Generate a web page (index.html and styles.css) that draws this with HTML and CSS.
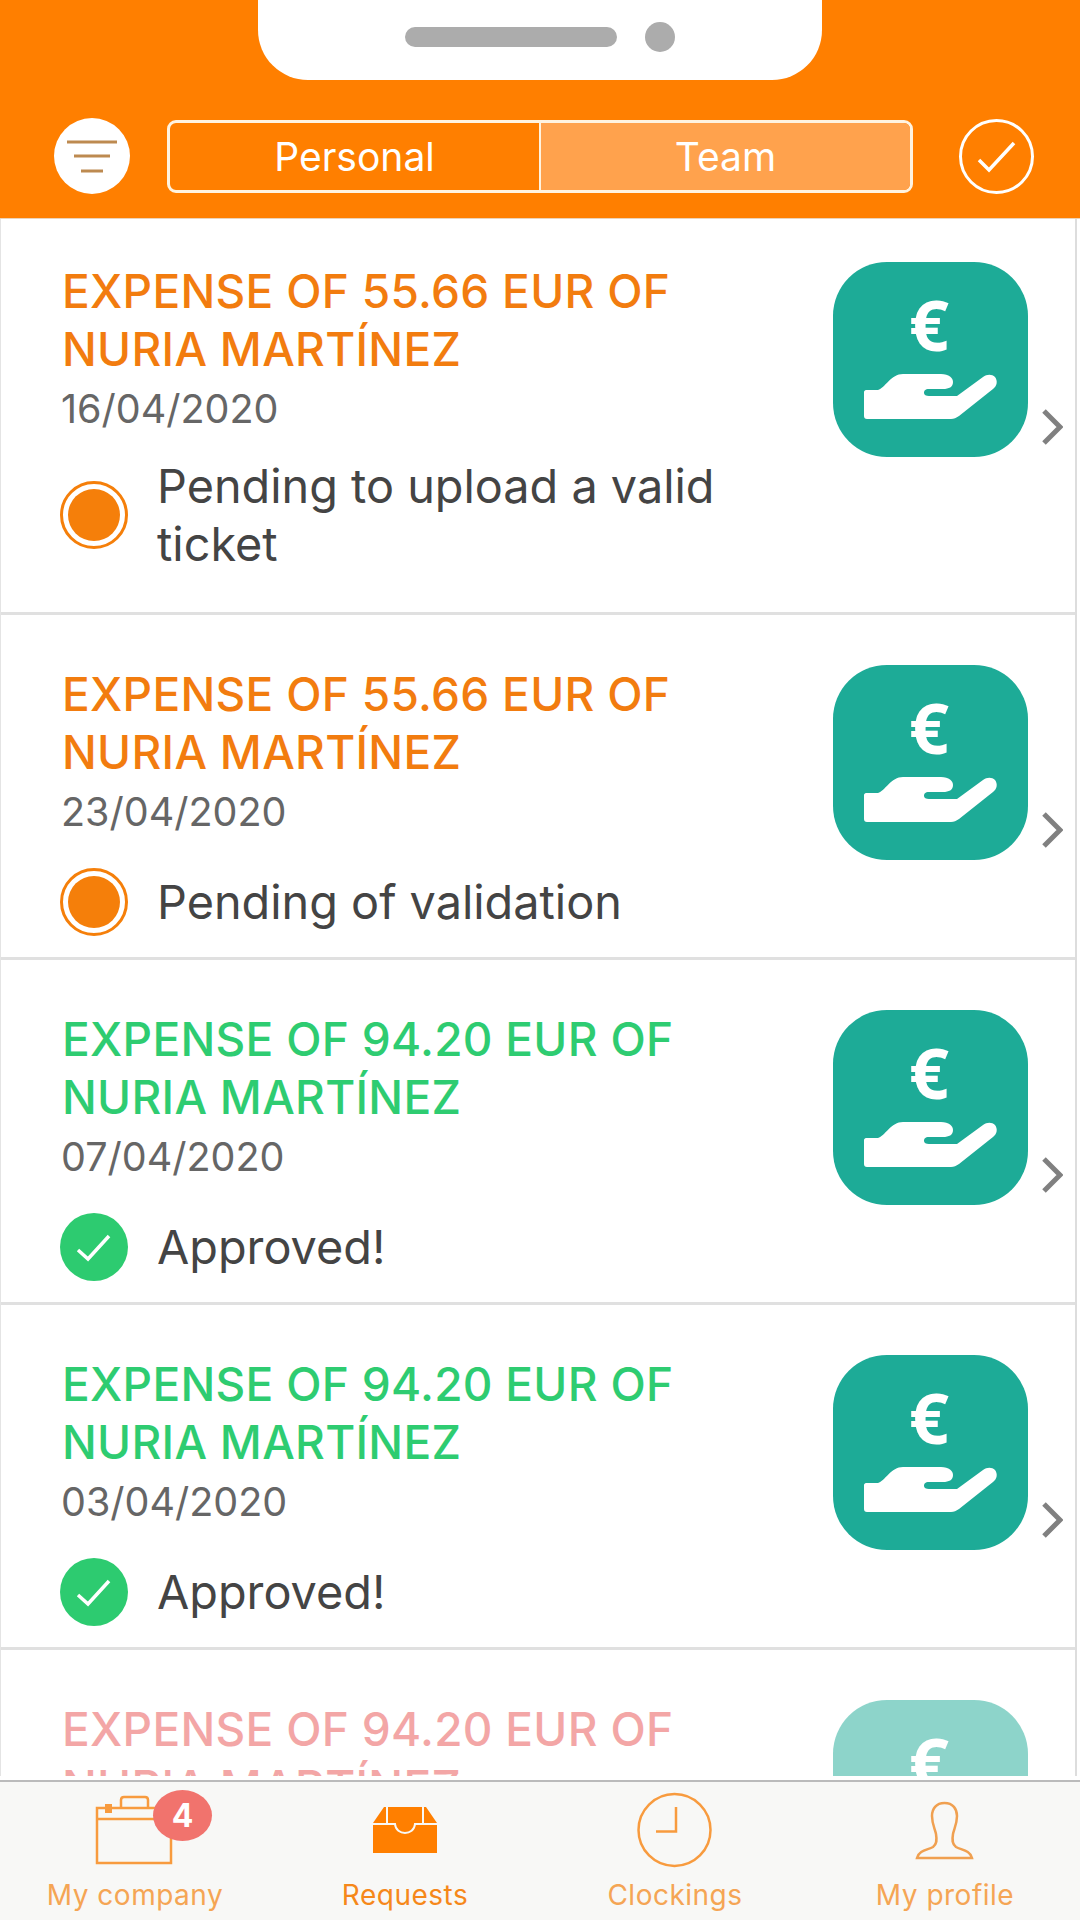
FILE: index.html
```html
<!DOCTYPE html>
<html lang="en">
<head>
    <meta charset="UTF-8" />
    <title>Requests</title>
    <link rel="stylesheet" href="styles.css">
</head>
<body>
    <svg class="defs" width="0" height="0">
        <symbol id="expense-icon" viewBox="0 0 195 195">
            <rect width="195" height="195" rx="54" fill="#1dab97" />
            <text x="96" y="89" text-anchor="middle" class="euro">€</text>
            <path fill="#fff" d="M33 128 H45 C52 126 58 112 70 112 H108 C116 112 120 116 120 120 C120 125 116 127 110 127 H96 C92 127 91 129 91 131 C91 133 93 134 96 134 H124 L150 115 C154 112 159 112 162 115 C165 119 164 124 160 127 L126 154 C123 156 121 157 118 157 H34 C32 157 31 156 31 154 V130 C31 129 32 128 33 128 Z" />
        </symbol>
        <symbol id="chevron" viewBox="0 0 22 38">
            <path d="M3 3 L19 19 L3 35" fill="none" stroke="#808080" stroke-width="5" />
        </symbol>
        <symbol id="pending" viewBox="0 0 68 68">
            <circle cx="34" cy="34" r="32.5" fill="#fff" stroke="#f57f0a" stroke-width="3" />
            <circle cx="34" cy="34" r="26" fill="#f57f0a" />
        </symbol>
        <symbol id="approved" viewBox="0 0 68 68">
            <circle cx="34" cy="34" r="34" fill="#2dcb70" />
            <path d="M18 37 L28 46 L49 23" fill="none" stroke="#fff" stroke-width="3.5" />
        </symbol>
    </svg>

    <header class="header">
        <div class="notch">
            <span class="notch-speaker"></span>
            <span class="notch-camera"></span>
        </div>
        <div class="toolbar">
            <button class="filter-btn">
                <svg width="76" height="76" viewBox="0 0 76 76">
                    <path d="M13 24 H63 M20 38 H56 M27 53 H49" stroke="#bd8a50" stroke-width="3" fill="none" />
                </svg>
            </button>
            <div class="segment">
                <div class="segment-item">Personal</div>
                <div class="segment-item segment-active">Team</div>
            </div>
            <button class="check-btn">
                <svg width="75" height="75" viewBox="0 0 75 75">
                    <path d="M20 41 L30 51 L55 24" stroke="#fff" stroke-width="3.5" fill="none" />
                </svg>
            </button>
        </div>
    </header>

    <main class="list">
        <article class="card card-first">
            <div class="card-body">
                <h2 class="card-title title-orange">EXPENSE OF 55.66 EUR OF NURIA MARTÍNEZ</h2>
                <div class="card-date">16/04/2020</div>
                <div class="status">
                    <svg class="status-icon"><use href="#pending" /></svg>
                    <span class="status-text">Pending to upload a valid ticket</span>
                </div>
            </div>
            <svg class="card-icon"><use href="#expense-icon" /></svg>
            <svg class="card-chevron"><use href="#chevron" /></svg>
        </article>

        <article class="card">
            <div class="card-body">
                <h2 class="card-title title-orange">EXPENSE OF 55.66 EUR OF NURIA MARTÍNEZ</h2>
                <div class="card-date">23/04/2020</div>
                <div class="status">
                    <svg class="status-icon"><use href="#pending" /></svg>
                    <span class="status-text">Pending of validation</span>
                </div>
            </div>
            <svg class="card-icon"><use href="#expense-icon" /></svg>
            <svg class="card-chevron"><use href="#chevron" /></svg>
        </article>

        <article class="card">
            <div class="card-body">
                <h2 class="card-title title-green">EXPENSE OF 94.20 EUR OF NURIA MARTÍNEZ</h2>
                <div class="card-date">07/04/2020</div>
                <div class="status">
                    <svg class="status-icon"><use href="#approved" /></svg>
                    <span class="status-text">Approved!</span>
                </div>
            </div>
            <svg class="card-icon"><use href="#expense-icon" /></svg>
            <svg class="card-chevron"><use href="#chevron" /></svg>
        </article>

        <article class="card">
            <div class="card-body">
                <h2 class="card-title title-green">EXPENSE OF 94.20 EUR OF NURIA MARTÍNEZ</h2>
                <div class="card-date">03/04/2020</div>
                <div class="status">
                    <svg class="status-icon"><use href="#approved" /></svg>
                    <span class="status-text">Approved!</span>
                </div>
            </div>
            <svg class="card-icon"><use href="#expense-icon" /></svg>
            <svg class="card-chevron"><use href="#chevron" /></svg>
        </article>

        <article class="card card-faded">
            <div class="card-body">
                <h2 class="card-title title-red">EXPENSE OF 94.20 EUR OF NURIA MARTÍNEZ</h2>
            </div>
            <svg class="card-icon"><use href="#expense-icon" /></svg>
            <svg class="card-chevron"><use href="#chevron" /></svg>
        </article>
    </main>

    <nav class="tabbar">
        <a href="#" class="tab">
            <svg class="tab-icon" viewBox="0 0 90 84">
                <path d="M7 20 H81 V75 H7 Z M7 31 H81 M31 19 V12 C31 10 32 9 34 9 H55 C57 9 58 10 58 12 V19" fill="none" stroke="#f89b3e" stroke-width="2.5" />
                <rect x="15" y="16" width="7" height="9" fill="#f89b3e" />
            </svg>
            <span class="badge">4</span>
            <span class="tab-label">My company</span>
        </a>
        <a href="#" class="tab tab-active">
            <svg class="tab-icon" viewBox="0 0 90 84">
                <path d="M24 19 H66 L77 35 V65 H13 V35 Z" fill="#ff7f00" />
                <path d="M13 36 H35 C36 48 54 48 55 36 H77 M27 19 V36 M63 19 V36" fill="none" stroke="#f8f8f6" stroke-width="2" />
            </svg>
            <span class="tab-label">Requests</span>
        </a>
        <a href="#" class="tab">
            <svg class="tab-icon" viewBox="0 0 90 84">
                <circle cx="44.5" cy="42" r="36" fill="none" stroke="#f89b3e" stroke-width="2.5" />
                <path d="M46 19 V43.5 H26" fill="none" stroke="#f89b3e" stroke-width="2.5" />
            </svg>
            <span class="tab-label">Clockings</span>
        </a>
        <a href="#" class="tab">
            <svg class="tab-icon" viewBox="0 0 90 84">
                <path transform="translate(16 14)" d="M28.5 1 C20 1 16 7 16 14 C16 22 19 27 20 32 C21 38 21 42 17 45 C12 48 3 48 1 56 H56 C54 48 45 48 40 45 C36 42 36 38 37 32 C38 27 41 22 41 14 C41 7 37 1 28.5 1 Z" fill="none" stroke="#f0a050" stroke-width="2.5" />
            </svg>
            <span class="tab-label">My profile</span>
        </a>
    </nav>
</body>
</html>
```

FILE: styles.css
```css
* {
    margin: 0;
    padding: 0;
    box-sizing: border-box;
    font-family: Inter, "Liberation Sans", sans-serif;
}
body {
    display: flex;
    flex-direction: column;
    width: 1080px;
    height: 1920px;
    overflow: hidden;
    background: #fff;
}
.defs { position: absolute; }
.euro { font-family: "Open Sans", sans-serif; font-weight: 700; font-size: 70px; fill: #fff; }

/* header */
.header {
    height: 219px;
    flex-shrink: 0;
    background: #ff7f00;
    border-bottom: 1px solid #ecd3b8;
}
.notch {
    width: 564px;
    height: 80px;
    margin: 0 auto;
    background: #fff;
    border-radius: 0 0 50px 50px;
    display: flex;
    align-items: center;
    justify-content: center;
    gap: 28px;
    padding: 0 0 6px 0;
}
.notch-speaker { width: 212px; height: 20px; border-radius: 10px; background: #acacac; }
.notch-camera { width: 30px; height: 30px; border-radius: 50%; background: #acacac; }
.toolbar {
    display: flex;
    align-items: center;
    margin-top: 38px;
    padding-left: 54px;
}
.filter-btn {
    width: 76px;
    height: 76px;
    border: none;
    border-radius: 50%;
    background: #fff;
}
.segment {
    display: flex;
    width: 746px;
    height: 73px;
    margin: 0 46px 0 37px;
    border: 3px solid #fff3e0;
    border-radius: 9px;
    overflow: hidden;
}
.segment-item {
    flex: 1;
    display: flex;
    align-items: center;
    justify-content: center;
    color: #fff;
    font-size: 39px;
}
.segment-active { flex: 0 0 371px; background: #ffa24d; border-left: 2px solid #fff3e0; }
.check-btn {
    width: 75px;
    height: 75px;
    border: 3px solid #fff;
    border-radius: 50%;
    background: none;
    display: flex;
    align-items: center;
    justify-content: center;
}
.check-btn svg, .filter-btn svg { display: block; flex-shrink: 0; }

/* list */
.list {
    flex: 1;
    min-height: 0;
    margin: 0 3px 4px 0;
    overflow: hidden;
    border-left: 1px solid #e4e4e4;
    border-right: 2px solid #ddd;
    position: relative;
}
.card {
    display: flex;
    align-items: flex-start;
    height: 345px;
    padding: 50px 0 0 61px;
    border-bottom: 3px solid #e0e0e0;
}
.card-first { height: 396px; padding-top: 43px; }
.card-faded { opacity: 0.5; }
.card-body { width: 771px; flex-shrink: 0; }
.card-title {
    width: 700px;
    font-size: 46px;
    font-weight: 500;
    line-height: 58px;
    letter-spacing: 0.3px;
}
.title-orange { color: #f27c0f; }
.title-green { color: #2ecc71; }
.title-red { color: #e85050; }
.card-date { font-size: 39.5px; line-height: 58px; margin: 2px 0 0 -1px; color: #666; }
.status {
    display: flex;
    align-items: center;
    gap: 29px;
    margin: 27px 0 0 -2px;
    width: 680px;
}
.card-first .status { margin-top: 19px; }
.status-icon { width: 68px; height: 68px; flex-shrink: 0; }
.status-text { font-size: 46.8px; line-height: 58px; color: #444; }
.card-icon { width: 195px; height: 195px; flex-shrink: 0; }
.card-chevron { width: 22px; height: 38px; margin: 146px 0 0 13px; flex-shrink: 0; }

/* tabs */
.tabbar {
    height: 140px;
    flex-shrink: 0;
    display: grid;
    grid-template-columns: repeat(4, 1fr);
    background: #f8f8f6;
    border-top: 2px solid #bbb;
}
.tab {
    position: relative;
    display: flex;
    flex-direction: column;
    align-items: center;
    padding-top: 6px;
    text-decoration: none;
    color: #f5a554;
}
.tab-active { color: #f6881a; }
.tab-icon { width: 90px; height: 84px; display: block; }
.tab-label { font-size: 28px; line-height: 34px; margin-top: 6px; letter-spacing: 0.5px; }
.badge {
    position: absolute;
    left: 153px;
    top: 8px;
    width: 59px;
    height: 51px;
    border-radius: 50%;
    background: #f1736d;
    color: #fff;
    font-size: 32px;
    font-weight: 700;
    line-height: 51px;
    text-align: center;
}
```
